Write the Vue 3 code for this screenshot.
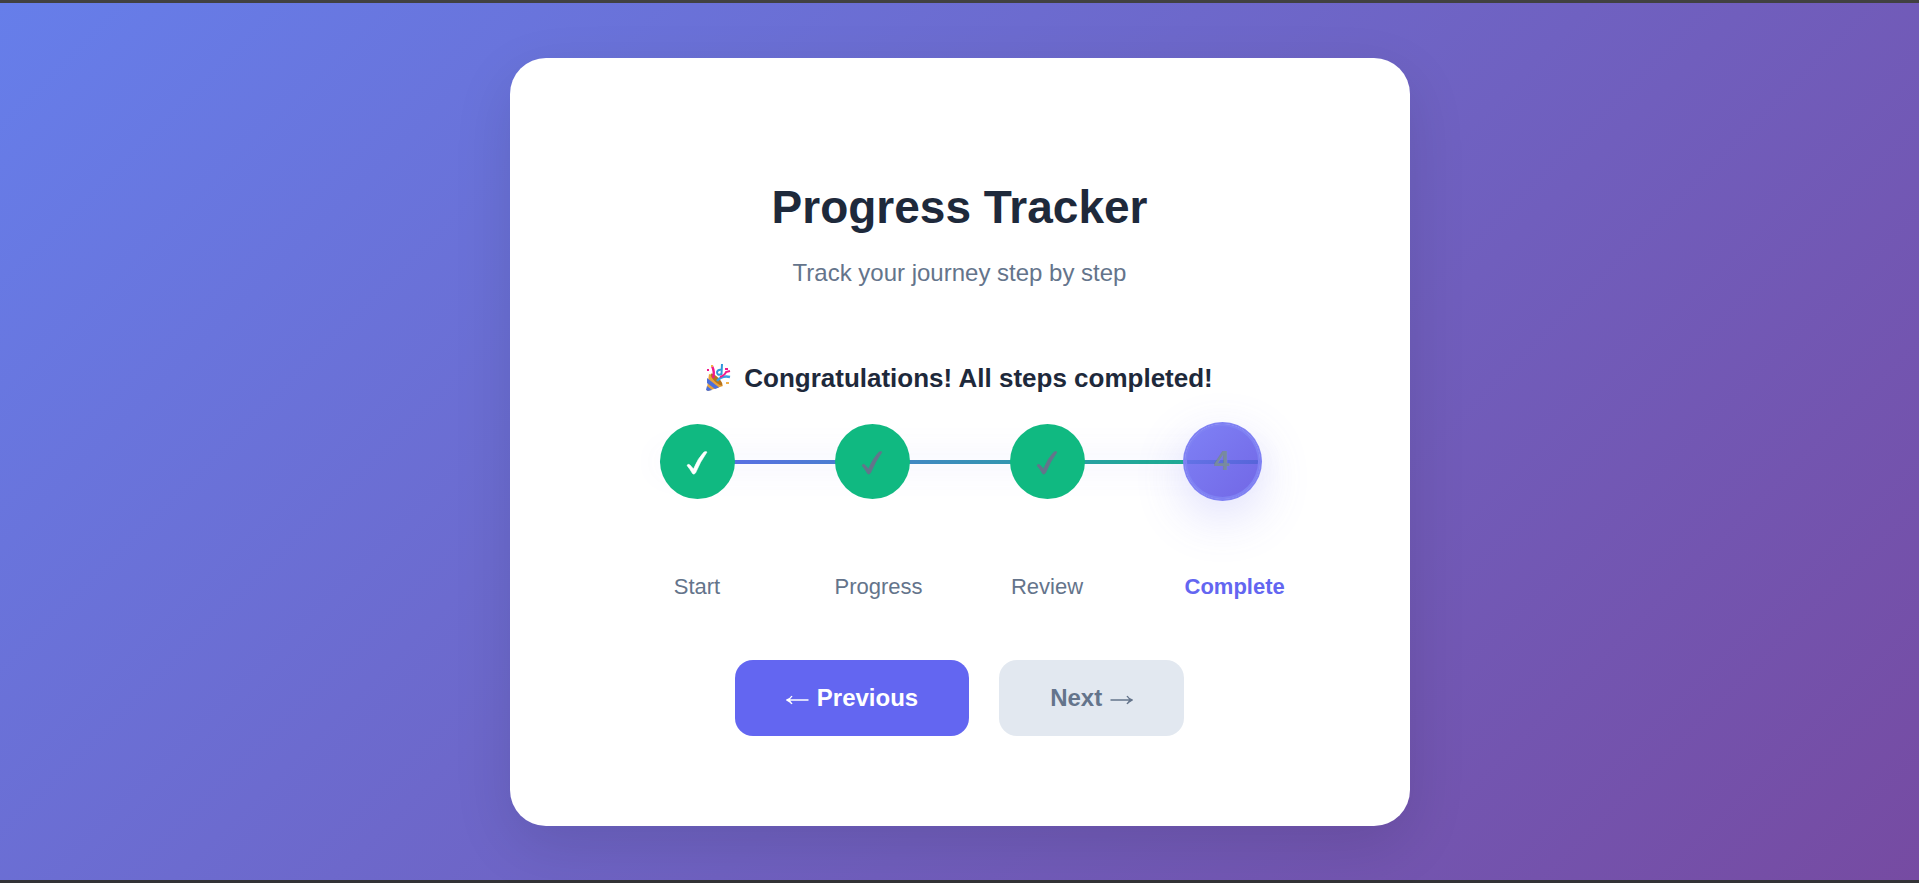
<script setup>
import { ref, computed } from 'vue'

const steps = ['Start', 'Progress', 'Review', 'Complete']
const current = ref(3)
const isLast = computed(() => current.value === steps.length - 1)

function previous() {
  if (current.value > 0) current.value--
}
function next() {
  if (!isLast.value) current.value++
}
</script>

<template>
  <main class="page">
    <section class="card">
      <h1 class="title">Progress Tracker</h1>
      <p class="subtitle">Track your journey step by step</p>
      <p class="status">
        <svg class="party" viewBox="0 0 26 28" aria-hidden="true">
          <path d="M3 10 Q13 13 17 22 L2 27 Q0 27 1 24Z" fill="#e9a23b" />
          <path d="M1 14 L13 23.500 L9 25 L1 19Z M1 22 L6 26 L2 27 L0 26Z" fill="#4a6fdc" />
          <ellipse cx="10.500" cy="15.500" rx="2.500" ry="8" transform="rotate(-45 10.500 15.500)" fill="#b8741a" />
          <path d="M7 14 Q9 8 6 2" fill="none" stroke="#f0198c" stroke-width="2.400" />
          <path d="M16 0 L15.500 10 Q11 12 11 8 Q12 5 16 6" fill="none" stroke="#2f97dc" stroke-width="2" />
          <path d="M11 17 Q16 11 24 13" fill="none" stroke="#3b9ee2" stroke-width="2.600" />
          <path d="M14 13 Q19 11 20 8 L24 7" fill="none" stroke="#f0198c" stroke-width="2" />
          <path d="M5 1h2v2h-2z M20 18h3v2h-3z" fill="#f2b14a" />
          <path d="M1 5h2v2h-2z M19 4h3v2h-3z" fill="#f0198c" />
        </svg>
        <span v-if="isLast">Congratulations! All steps completed!</span>
        <span v-else>Step {{ current + 1 }} of {{ steps.length }}</span>
      </p>

      <ol class="steps">
        <li v-for="(label, i) in steps" :key="label" class="step">
          <span class="dot" :class="{ done: i < current, active: i === current, first: i === 0 }">
            <svg v-if="i < current" class="tick" viewBox="0 0 22 24" aria-hidden="true">
              <path d="M1 14.500 Q2 12.500 4 14 L7.500 18 Q12 7 18 1 Q20 0 21 1 Q14 11 9.500 22 Q8 24 6.500 22.500 Q4 18 1 14.500Z" />
            </svg>
            <template v-else>{{ i + 1 }}</template>
          </span>
          <span class="label" :class="{ on: i === current }">{{ label }}</span>
        </li>
      </ol>

      <div class="actions">
        <button class="btn primary" type="button" @click="previous">
          <svg class="arrow" viewBox="0 0 23 12" aria-hidden="true"><path d="M22.500 6H1.500M6 2Q4.500 4.500 1 6Q4.500 7.500 6 10" /></svg>
          <span>Previous</span>
        </button>
        <button class="btn" type="button" :disabled="isLast" @click="next">
          <span>Next</span>
          <svg class="arrow" viewBox="0 0 23 12" aria-hidden="true"><path d="M0.500 6H21.500M17 2Q18.500 4.500 22 6Q18.500 7.500 17 10" /></svg>
        </button>
      </div>
    </section>
  </main>
</template>

<style>
body {
  margin: 0;
}
</style>

<style scoped>
.page {
  box-sizing: border-box;
  min-height: 100vh;
  display: flex;
  align-items: center;
  justify-content: center;
  padding: 48px 16px;
  border-top: 3px solid #414141;
  border-bottom: 3px solid #333336;
  background: linear-gradient(135deg, #667eea 0%, #764ba2 100%);
  font-family: "Liberation Sans", Arial, sans-serif;
  color: #1e293b;
}
.card {
  box-sizing: border-box;
  width: 100%;
  max-width: 900px;
  padding: 121px 64px 90px;
  display: flex;
  flex-direction: column;
  align-items: center;
  background: #fff;
  border-radius: 36px;
  box-shadow: 0 20px 60px rgba(0, 0, 0, 0.11);
}
.title {
  margin: 0;
  font-size: 46px;
  line-height: 56px;
}
.subtitle {
  margin: 24px 0 0;
  font-size: 24px;
  line-height: 28px;
  color: #64748b;
}
.status {
  display: flex;
  align-items: center;
  gap: 12px;
  margin: 75px 0 30px;
  font-size: 26px;
  font-weight: 700;
  line-height: 32px;
}
.party {
  width: 26px;
  height: 28px;
}
.steps {
  position: relative;
  z-index: 0;
  box-sizing: border-box;
  width: 100%;
  max-width: 600px;
  display: flex;
  justify-content: space-between;
  margin: 0;
  padding: 0;
  list-style: none;
}
.steps::before {
  content: "";
  position: absolute;
  z-index: -1;
  top: 36px;
  left: 0;
  right: 0;
  height: 4px;
  border-radius: 2px;
  background: linear-gradient(90deg, #6366f1, #10b981);
  box-shadow: 0 0 32px rgba(99, 102, 241, 0.3);
}
.step {
  width: 75px;
  display: flex;
  flex-direction: column;
}
.dot {
  display: flex;
  align-items: center;
  justify-content: center;
  height: 75px;
  border-radius: 50%;
  font-size: 28px;
  font-weight: 700;
  color: #64748b;
  background: #e2e8f0;
}
.dot.done {
  background: #10b981;
}
.dot.first {
  color: #fff;
}
.dot.active {
  color: #788a9f;
  background: linear-gradient(135deg, rgba(113, 116, 245, 0.9), rgba(91, 78, 225, 0.86));
  box-shadow: inset 0 0 0 2px #7f81f3, 0 0 0 2px #7f81f3, 0 16px 52px rgba(99, 102, 241, 0.24);
}
.tick {
  width: 22px;
  height: 24px;
  margin-top: 4px;
  fill: currentColor;
  stroke: currentColor;
  stroke-width: 0.600;
}
.label {
  margin-top: 75px;
  font-size: 22px;
  line-height: 26px;
  text-align: center;
  color: #64748b;
}
.label.on {
  font-weight: 700;
  color: #6366f1;
}
.actions {
  display: flex;
  gap: 30px;
  margin-top: 60px;
}
.btn {
  display: flex;
  align-items: center;
  gap: 8px;
  padding: 24px 51px;
  border: 0;
  border-radius: 18px;
  font-family: inherit;
  font-size: 24px;
  font-weight: 700;
  line-height: 28px;
  color: #64748b;
  background: #e2e8f0;
}
.btn.primary {
  color: #fff;
  background: #6366f1;
}
.arrow {
  width: 23px;
  height: 12px;
  margin-top: 4px;
  fill: none;
  stroke: currentColor;
  stroke-width: 1.400;
}
</style>
